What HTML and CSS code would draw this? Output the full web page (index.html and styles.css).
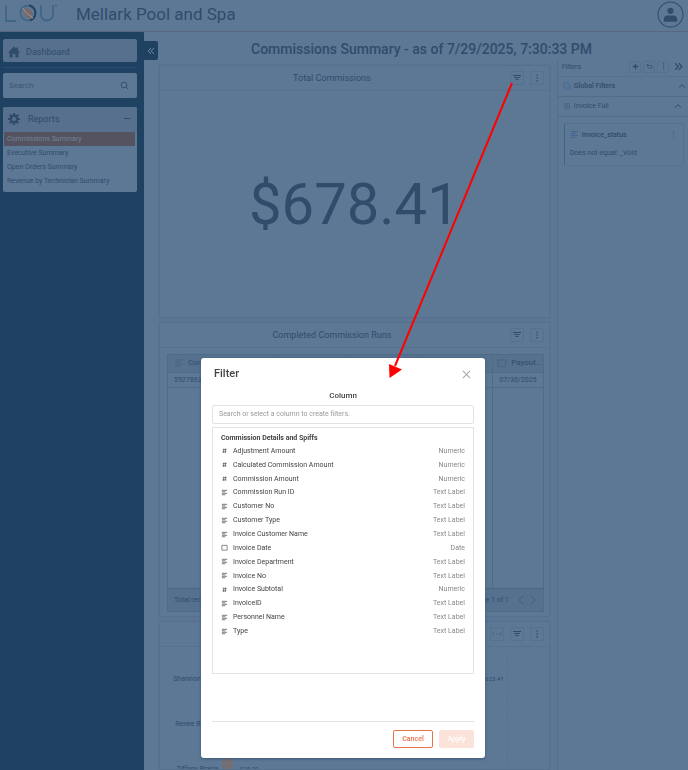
FILE: index.html
```html
<!DOCTYPE html>
<html lang="en">
<head>
    <meta charset="UTF-8">
    <meta name="viewport" content="width=device-width, initial-scale=1.0">
    <title>Commissions Summary</title>
    <link rel="stylesheet" href="styles.css">
</head>
<body>
    <!-- shared icons -->
    <svg class="icon-defs" width="0" height="0">
        <symbol id="i-filter" viewBox="0 0 10 10"><path d="M1 2.5h8M2.3 4.5h5.4M3.6 6.5h2.8" stroke="currentColor" stroke-width="1.2"/></symbol>
        <symbol id="i-dots" viewBox="0 0 10 10"><path d="M4.4 1.5h1.3v1.3H4.4zM4.4 4.3h1.3v1.3H4.4zM4.4 7.1h1.3v1.3H4.4z" fill="currentColor"/></symbol>
        <symbol id="i-text" viewBox="0 0 8 8"><path d="M1 1.5h6M1 3.2h4M1 4.9h6M1 6.6h4" stroke="currentColor" stroke-width=".8"/></symbol>
        <symbol id="i-num" viewBox="0 0 8 8"><path d="M2 3h4.5M1.6 5.5h4.5M3.3 1.7L2.7 6.8M5.4 1.7L4.8 6.8" stroke="currentColor" stroke-width=".7"/></symbol>
        <symbol id="i-date" viewBox="0 0 8 8"><path d="M1 1.500h6v5.500h-6z" fill="none" stroke="currentColor" stroke-width=".7"/></symbol>
        <symbol id="i-up" viewBox="0 0 8 8"><path d="M1 5.5L4 2.7l3 2.8" fill="none" stroke="currentColor"/></symbol>
    </svg>

    <header class="top-bar">
        <svg class="logo" viewBox="0 0 54 20" fill="none">
            <path d="M1 1v16h10" stroke="#3f6688" stroke-width="1.800"/>
            <circle cx="23" cy="9" r="7.500" stroke="#3f6688" stroke-width="1.800"/>
            <path d="M24 1.500a7.500 7.500 0 0 1 6 10a7.500 7.500 0 0 1-5 5" stroke="#234564" stroke-width="2"/>
            <path d="M17.500 4c6-1 11 3 10.500 10.500c-7 1-11-4-10.500-10.500z" fill="#79696b"/>
            <path d="M18 4c2 5 5 6 10 10" stroke="#9aa5b3" stroke-width=".8"/>
            <path d="M36 1v9.500a6 6 0 0 0 12 0V1" stroke="#3f6688" stroke-width="1.800"/>
            <circle cx="51" cy="1.500" r="1" fill="#3f6688"/>
        </svg>
        <span class="company">Mellark Pool and Spa</span>
        <button class="avatar" aria-label="Account">
            <svg viewBox="0 0 26 26"><circle cx="13" cy="13" r="12" fill="none" stroke="currentColor"/><circle cx="13" cy="9.500" r="3" fill="currentColor"/><path d="M6.500 20v-2q0-4 4-4h5q4 0 4 4v2z" fill="currentColor"/></svg>
        </button>
    </header>

    <div class="layout">
        <nav class="sidebar">
            <a class="side-box dashboard" href="#">
                <svg class="side-icon" viewBox="0 0 12 12"><path d="M6 .5L0 6.500h1.500v5h3.200V8h2.600v3.500h3.200v-5H12L10 4.500V1.500H8.500V3z" fill="currentColor"/></svg>
                Dashboard
            </a>
            <hr class="side-line">
            <div class="side-box search">
                <input type="text" placeholder="Search" aria-label="Search">
                <svg class="search-icon" viewBox="0 0 10 10"><circle cx="4.400" cy="4.400" r="3.200" fill="none" stroke="currentColor"/><path d="M6.800 6.800L9.200 9.200" stroke="currentColor"/></svg>
            </div>
            <div class="side-box reports">
                <div class="reports-head">
                    <svg class="side-icon" viewBox="0 0 12 12"><circle cx="6" cy="6" r="3.200" fill="none" stroke="currentColor" stroke-width="2.400"/><path d="M6 0v2.500M6 9.500V12M0 6h2.500M9.500 6H12M1.800 1.800l1.700 1.700M8.500 8.500l1.700 1.700M1.800 10.200l1.700-1.700M8.500 3.500l1.700-1.700" stroke="currentColor" stroke-width="2.200"/></svg>
                    <span>Reports</span>
                    <span class="minus"></span>
                </div>
                <a class="active" href="#">Commissions Summary</a>
                <a href="#">Executive Summary</a>
                <a href="#">Open Orders Summary</a>
                <a href="#">Revenue by Technician Summary</a>
            </div>
        </nav>
        <button class="collapse" aria-label="Collapse menu">
            <svg viewBox="0 0 8 8"><path d="M4 1L1.200 4L4 7M7 1L4.200 4L7 7" fill="none" stroke="currentColor"/></svg>
        </button>

        <main class="content">
            <h1>Commissions Summary - as of 7/29/2025, 7:30:33 PM</h1>
            <div class="columns">
                <div class="cards">
                    <section class="card total">
                        <div class="card-head">
                            <h2>Total Commissions</h2>
                            <button aria-label="Filter"><svg><use href="#i-filter"/></svg></button>
                            <button aria-label="More"><svg><use href="#i-dots"/></svg></button>
                        </div>
                        <div class="amount">$678.41</div>
                    </section>

                    <section class="card runs">
                        <div class="card-head">
                            <h2>Completed Commission Runs</h2>
                            <button aria-label="Filter"><svg><use href="#i-filter"/></svg></button>
                            <button aria-label="More"><svg><use href="#i-dots"/></svg></button>
                        </div>
                        <div class="grid-wrap">
                            <table>
                                <colgroup><col class="c-run"><col><col><col><col class="c-payout"></colgroup>
                                <thead>
                                    <tr>
                                        <th><svg><use href="#i-text"/></svg>Commis...</th>
                                        <th></th>
                                        <th></th>
                                        <th></th>
                                        <th><svg><use href="#i-date"/></svg>Payout...</th>
                                    </tr>
                                </thead>
                                <tbody>
                                    <tr><td>5927863</td><td></td><td></td><td></td><td>07/30/2025</td></tr>
                                    <tr class="rest"><td></td><td></td><td></td><td></td><td></td></tr>
                                </tbody>
                            </table>
                            <div class="pager">
                                <span>Total records</span>
                                <span class="page-no">Page 1 of 1</span>
                                <button aria-label="Previous page"><svg viewBox="0 0 8 8"><path d="M5.500 .5L2 4l3.500 3.500" fill="none" stroke="currentColor" stroke-width=".7"/></svg></button>
                                <button aria-label="Next page"><svg viewBox="0 0 8 8"><path d="M2.500 .5L6 4L2.500 7.500" fill="none" stroke="currentColor" stroke-width=".7"/></svg></button>
                            </div>
                        </div>
                    </section>

                    <section class="card people">
                        <div class="card-head">
                            <h2></h2>
                            <button class="faint" aria-label="Resize"><svg viewBox="0 0 10 10"><path d="M1 5h8M1 3v4M9 3v4" stroke="currentColor" stroke-width=".8" stroke-dasharray="2 1"/></svg></button>
                            <button aria-label="Filter"><svg><use href="#i-filter"/></svg></button>
                            <button aria-label="More"><svg><use href="#i-dots"/></svg></button>
                        </div>
                        <div class="chart">
                            <div class="bar-row"><span class="name">Shannon Reed</span><span class="bar" style="width: 253px"></span><span class="value">$623.41</span></div>
                            <div class="bar-row"><span class="name">Renee Barnes</span><span class="bar" style="width: 12px"></span><span class="value">$30.00</span></div>
                            <div class="bar-row"><span class="name">Tiffany Braga</span><span class="bar" style="width: 11px"></span><span class="value">$25.00</span></div>
                        </div>
                    </section>
                </div>

                <aside class="filters">
                    <div class="filters-head">
                        <span>Filters</span>
                        <button aria-label="Add filter"><svg viewBox="0 0 10 10"><path d="M5 2v6M2 5h6" stroke="currentColor" stroke-width="1.400"/></svg></button>
                        <button aria-label="Undo"><svg viewBox="0 0 10 10"><path d="M4 2L2 3.800L4 5.600M2 3.800h4.500a1.600 1.600 0 0 1 0 3.200H4" fill="none" stroke="currentColor" stroke-width=".8"/></svg></button>
                        <button aria-label="More"><svg><use href="#i-dots"/></svg></button>
                        <button class="plain" aria-label="Hide filters"><svg viewBox="0 0 8 8"><path d="M1 1l2.800 3L1 7M4.200 1L7 4L4.200 7" fill="none" stroke="currentColor" stroke-width="1.200"/></svg></button>
                    </div>
                    <div class="group strong">
                        <svg viewBox="0 0 8 8"><path d="M1 1h5v5H1zM3 6.500v1h4.500V3H6.500" fill="none" stroke="#416b94" stroke-width=".8"/></svg>
                        <span>Global Filters</span>
                        <svg><use href="#i-up"/></svg>
                    </div>
                    <div class="group">
                        <svg viewBox="0 0 8 8"><path d="M1.500 1.500h5v5h-5zM1.500 3.200h5M1.500 4.900h5M4 1.500v5" fill="none" stroke="#48627f" stroke-width=".6"/></svg>
                        <span>Invoice Full</span>
                        <svg><use href="#i-up"/></svg>
                    </div>
                    <div class="filter-card">
                        <div class="filter-name">
                            <svg class="kind"><use href="#i-text"/></svg>
                            <span>invoice_status</span>
                            <svg class="more"><use href="#i-dots"/></svg>
                        </div>
                        <p>Does not equal: _Void</p>
                    </div>
                </aside>
            </div>
        </main>
    </div>

    <div class="backdrop">
        <div class="dialog" role="dialog" aria-labelledby="dialogTitle">
            <div class="dialog-head">
                <h3 id="dialogTitle">Filter</h3>
                <button class="close" aria-label="Close"><svg viewBox="0 0 10 10"><path d="M1 1l8 8M9 1L1 9" stroke="currentColor" stroke-width="1.200"/></svg></button>
            </div>
            <label for="columnSearch">Column</label>
            <input type="text" id="columnSearch" placeholder="Search or select a column to create filters.">
            <div class="list-box">
                <h4>Commission Details and Spiffs</h4>
                <ul>
                    <li><svg><use href="#i-num"/></svg><span>Adjustment Amount</span><em>Numeric</em></li>
                    <li><svg><use href="#i-num"/></svg><span>Calculated Commission Amount</span><em>Numeric</em></li>
                    <li><svg><use href="#i-num"/></svg><span>Commission Amount</span><em>Numeric</em></li>
                    <li><svg><use href="#i-text"/></svg><span>Commission Run ID</span><em>Text Label</em></li>
                    <li><svg><use href="#i-text"/></svg><span>Customer No</span><em>Text Label</em></li>
                    <li><svg><use href="#i-text"/></svg><span>Customer Type</span><em>Text Label</em></li>
                    <li><svg><use href="#i-text"/></svg><span>Invoice Customer Name</span><em>Text Label</em></li>
                    <li><svg><use href="#i-date"/></svg><span>Invoice Date</span><em>Date</em></li>
                    <li><svg><use href="#i-text"/></svg><span>Invoice Department</span><em>Text Label</em></li>
                    <li><svg><use href="#i-text"/></svg><span>Invoice No</span><em>Text Label</em></li>
                    <li><svg><use href="#i-num"/></svg><span>Invoice Subtotal</span><em>Numeric</em></li>
                    <li><svg><use href="#i-text"/></svg><span>InvoiceID</span><em>Text Label</em></li>
                    <li><svg><use href="#i-text"/></svg><span>Personnel Name</span><em>Text Label</em></li>
                    <li><svg><use href="#i-text"/></svg><span>Type</span><em>Text Label</em></li>
                </ul>
            </div>
            <div class="dialog-foot">
                <button class="cancel">Cancel</button>
                <button class="apply" disabled>Apply</button>
            </div>
        </div>
    </div>

    <!-- arrow from the filter button to the dialog -->
    <svg class="arrow" viewBox="0 0 124 296"><path d="M123 1L6 284" stroke="#f00" stroke-width="2"/><path d="M0 282L.5 296L13 287.500z" fill="#f00"/></svg>
</body>
</html>
```
FILE: styles.css
```css
* {
    box-sizing: border-box;
}
body {
    margin: 0;
    height: 100vh;
    overflow: hidden;
    display: flex;
    flex-direction: column;
    font-family: Roboto, "Liberation Sans", sans-serif;
    font-size: 7px;
    color: #2f4c6b;
    background-color: #5d7895;
}
h1, h2, h3, h4, p, ul {
    margin: 0;
    padding: 0;
}
button {
    padding: 0;
    border: 0;
    background: none;
    color: inherit;
    font-family: inherit;
    display: flex;
    align-items: center;
    justify-content: center;
}
input {
    font-family: inherit;
    min-width: 0;
}
a {
    color: inherit;
    text-decoration: none;
}
svg {
    display: block;
    flex: none;
}
.icon-defs {
    position: absolute;
}

/* header */
.top-bar {
    height: 32px;
    flex: none;
    display: flex;
    align-items: center;
    padding: 0 4px 3px 5px;
    border-bottom: 1px solid #576880;
}
.logo {
    width: 54px;
    height: 20px;
}
.company {
    margin-left: 17px;
    font-size: 17px;
    line-height: 24px;
}
.avatar {
    margin-left: auto;
}
.avatar svg {
    width: 27px;
    height: 27px;
}

/* sidebar */
.layout {
    flex: 1;
    display: flex;
    min-height: 0;
}
.sidebar {
    width: 144px;
    flex: none;
    padding: 7px 7px 0 3px;
    background-color: #1f4262;
}
.side-box {
    background-color: #5d7895;
    border-radius: 2px;
}
.dashboard {
    height: 23px;
    display: flex;
    align-items: center;
    gap: 6px;
    padding: 2px 0 0 5px;
    font-size: 9px;
    background-color: #56708d;
}
.side-icon {
    width: 12px;
    height: 12px;
}
.side-line {
    margin: 5px 0;
    border: 0;
    border-top: 1px solid #2b4b6b;
}
.search {
    height: 25px;
    display: flex;
    align-items: center;
    padding: 0 8px 0 6px;
}
.search input {
    flex: 1;
    padding: 0;
    border: 0;
    outline: 0;
    background: none;
    font-size: 8px;
}
.search input::placeholder {
    color: #3b5674;
}
.search-icon {
    width: 9px;
    height: 9px;
}
.reports {
    margin-top: 9px;
    padding-bottom: 4px;
}
.reports-head {
    height: 25px;
    display: flex;
    align-items: center;
    gap: 8px;
    padding: 0 7px 2px 5px;
    font-size: 9px;
    background-color: #56708d;
    border-radius: 2px 2px 0 0;
}
.minus {
    width: 6px;
    height: 1px;
    margin-left: auto;
    background-color: #2f4c6b;
}
.reports a {
    display: block;
    height: 14px;
    margin: 0 2px 0 1px;
    padding-left: 3px;
    font-size: 7px;
    line-height: 14px;
}
.reports a.active {
    color: #71839a;
    background-color: #55535f;
}
.collapse {
    width: 14px;
    height: 19px;
    flex: none;
    margin-top: 9px;
    color: #7189a2;
    background-color: #1f4262;
    border-radius: 0 2px 2px 0;
}
.collapse svg {
    width: 8px;
    height: 8px;
}

/* content */
.content {
    flex: 1;
    display: flex;
    flex-direction: column;
    min-width: 0;
}
h1 {
    height: 28px;
    padding: 6px 3px 0 0;
    text-align: center;
    font-size: 14px;
    line-height: 22px;
    font-weight: 500;
}
.columns {
    flex: 1;
    display: flex;
    gap: 7px;
    min-height: 0;
}
.cards {
    flex: 3;
    display: flex;
    flex-direction: column;
    gap: 4px;
    padding: 5px 0 0 1px;
}
.card {
    flex: none;
    border: 1px solid #56718e;
    border-radius: 2px;
    box-shadow: 0 0 2px #4f6a88;
}
.card-head {
    height: 25px;
    display: flex;
    align-items: center;
    gap: 6px;
    padding: 0 5px 1px 0;
    border-bottom: 1px solid #56718e;
}
.card-head h2 {
    flex: 1;
    text-align: center;
    font-size: 9px;
    font-weight: 400;
}
.card-head button, .filters-head button {
    width: 14px;
    height: 14px;
    border: 1px solid #56718e;
    border-radius: 2px;
}
.card-head svg {
    width: 10px;
    height: 10px;
}
.card-head .faint {
    color: #4a6583;
}
.total {
    height: 253px;
}
.amount {
    padding-top: 79px;
    text-align: center;
    font-size: 58px;
    line-height: 68px;
}
.runs {
    height: 295px;
}
.grid-wrap {
    height: 258px;
    margin: 6px 5px 0 7px;
    display: flex;
    flex-direction: column;
    border: 1px solid #506b88;
}
table {
    flex: 1;
    width: 100%;
    table-layout: fixed;
    border-collapse: collapse;
}
.c-run {
    width: 28%;
}
.c-payout {
    width: 50px;
}
th, td {
    height: 15px;
    padding: 0 6px;
    overflow: hidden;
    white-space: nowrap;
    text-align: left;
    font-weight: 400;
    border: 1px solid #506b88;
    border-width: 0 1px 1px 0;
}
th:last-child, td:last-child {
    border-right: 0;
}
th {
    height: 17px;
    font-size: 8px;
    background-color: #56718e;
}
th svg {
    width: 10px;
    height: 10px;
    display: inline-block;
    vertical-align: middle;
    margin-right: 4px;
    color: #48627f;
}
th:last-child {
    padding: 0 0 0 4px;
}
.rest td {
    height: auto;
    border-bottom-color: #4b6683;
}
.pager {
    height: 22px;
    display: flex;
    align-items: center;
    padding: 0 5px 0 6px;
    background-color: #56718e;
}
.page-no {
    margin: 0 7px 0 auto;
}
.pager svg {
    width: 11px;
    height: 10px;
    color: #3f5b79;
}
.people {
    flex: 1;
    min-height: 0;
    overflow: hidden;
}
.chart {
    width: 348px;
    margin-top: 9px;
    padding: 0 0 20px 10px;
    border-right: 1px dashed #546f8c;
}
.bar-row {
    height: 45px;
    display: flex;
    align-items: center;
}
.name {
    width: 48px;
    margin-right: 4px;
    text-align: right;
    white-space: nowrap;
}
.bar {
    height: 28px;
    background-color: #746f75;
}
.value {
    margin-left: 7px;
    font-size: 6px;
}

/* filters panel */
.filters {
    flex: 1;
    border-left: 1px solid #546f8c;
}
.filters-head {
    height: 17px;
    display: flex;
    align-items: center;
    gap: 2px;
    padding: 0 4px 3px 4px;
    border-bottom: 1px solid #56718e;
}
.filters-head span {
    flex: 1;
}
.filters-head button {
    width: 12px;
    height: 12px;
}
.filters-head .plain {
    border: 0;
    margin-left: 1px;
}
.filters-head svg {
    width: 9px;
    height: 9px;
}
.group {
    height: 20px;
    display: flex;
    align-items: center;
    gap: 3px;
    padding: 0 6px 2px 5px;
    border-bottom: 1px solid #526d8a;
}
.group.strong {
    padding-right: 2px;
    font-weight: 500;
}
.group span {
    flex: 1;
}
.group svg {
    width: 8px;
    height: 8px;
}
.filter-card {
    margin: 6px 4px 0 6px;
    padding: 6px 5px 8px 5px;
    border: 1px solid #56718e;
    border-left-color: #3c6590;
    border-radius: 2px;
}
.filter-name {
    display: flex;
    align-items: center;
    gap: 3px;
    font-weight: 500;
}
.filter-name span {
    flex: 1;
}
.filter-name svg {
    width: 9px;
    height: 9px;
}
.filter-name .kind {
    color: #3c6590;
}
.filter-name .more {
    color: #48627f;
}
.filter-card p {
    margin-top: 10px;
    line-height: 8px;
}

/* filter dialog */
.backdrop {
    position: fixed;
    inset: 0;
    display: flex;
    align-items: flex-end;
    justify-content: center;
    padding: 0 2px 12px 0;
}
.dialog {
    width: 284px;
    height: 400px;
    display: flex;
    flex-direction: column;
    padding: 8px 11px 10px;
    color: #444;
    background-color: #fff;
    border-radius: 3px;
    box-shadow: 0 1px 3px #3d5875;
}
.dialog-head {
    display: flex;
    align-items: center;
    justify-content: space-between;
    padding: 0 3px 0 2px;
}
.dialog-head h3 {
    font-size: 11px;
    line-height: 16px;
    font-weight: 500;
}
.close {
    color: #aaa;
}
.close svg {
    width: 9px;
    height: 9px;
}
.dialog label {
    margin: 8px 0 3px;
    text-align: center;
    font-size: 8px;
    line-height: 12px;
    font-weight: 500;
}
.dialog input {
    height: 19px;
    flex: none;
    padding: 0 6px 1px;
    border: 1px solid #e2e2e2;
    border-radius: 2px;
    font-size: 7px;
}
.dialog input::placeholder {
    color: #999;
}
.list-box {
    height: 247px;
    margin-top: 3px;
    padding: 4px 8px 0;
    border: 1px solid #e2e2e2;
}
.list-box h4 {
    font-size: 7px;
    line-height: 12px;
    font-weight: 700;
}
.list-box ul {
    height: 194px;
    display: grid;
    grid-auto-rows: 1fr;
    list-style: none;
}
.list-box li {
    display: flex;
    align-items: center;
    gap: 5px;
}
.list-box svg {
    width: 7px;
    height: 7px;
}
.list-box em {
    margin-left: auto;
    font-style: normal;
    color: #888;
}
.dialog-foot {
    margin-top: auto;
    padding-top: 8px;
    display: flex;
    justify-content: flex-end;
    gap: 6px;
    border-top: 1px solid #e2e2e2;
}
.dialog-foot button {
    height: 18px;
    font-size: 7px;
    font-weight: 500;
    border-radius: 2px;
}
.cancel {
    width: 40px;
    color: #e8734a;
    border: 1px solid #e8734a;
}
.apply {
    width: 35px;
    color: #fff;
    background-color: #fbe3d9;
}

.arrow {
    position: fixed;
    left: 389px;
    top: 82px;
    width: 124px;
    height: 296px;
}
```
